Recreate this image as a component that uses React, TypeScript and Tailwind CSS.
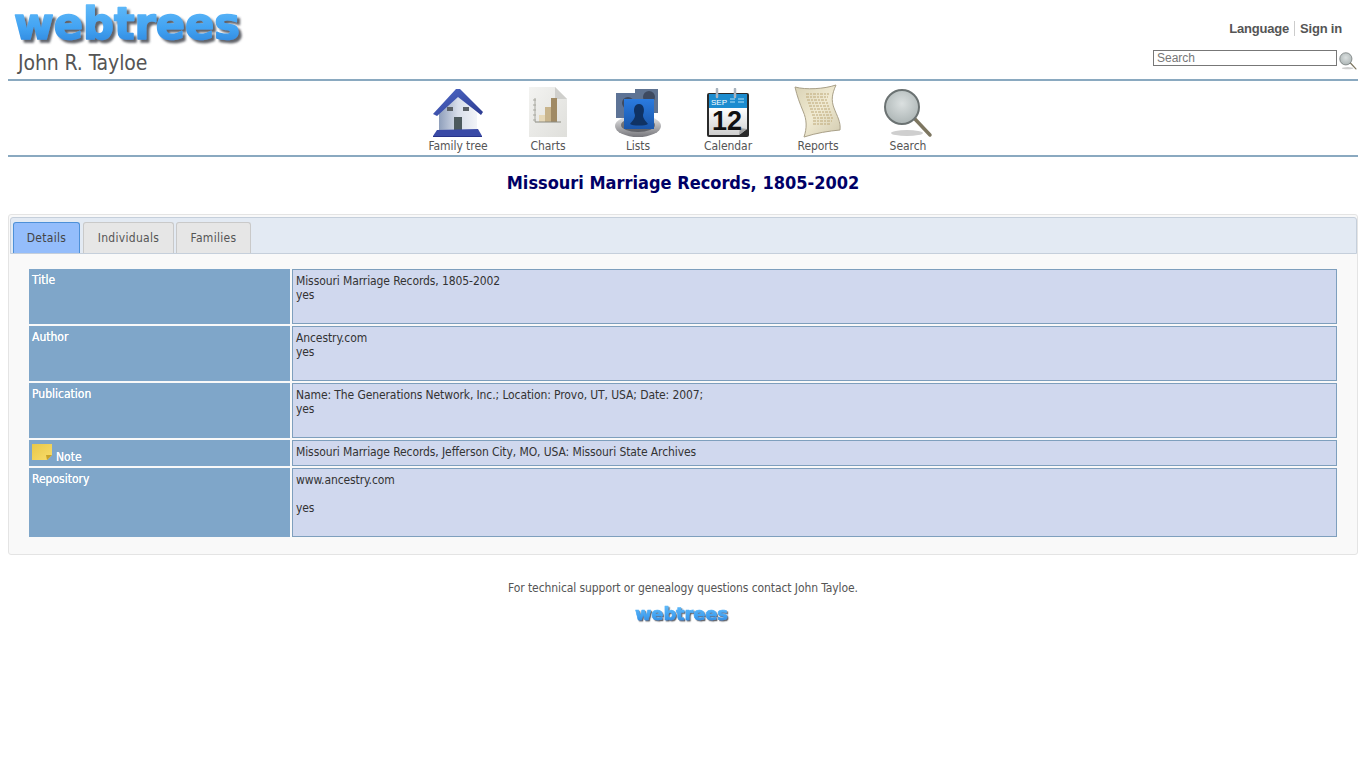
import type { ReactNode } from 'react';

const tahoma = "font-['DejaVu_Sans_Condensed','DejaVu_Sans',sans-serif] [font-stretch:condensed]";

function Logo({ width, height }: { width: number; height: number }) {
  const id = `wt${width}`;
  return (
    <svg width={width} height={height} viewBox="0 0 236 50" preserveAspectRatio="none" className="overflow-visible">
      <defs>
        <linearGradient id={id} x1="0" y1="0" x2="0" y2="1">
          <stop offset="0" stopColor="#68c0fb" />
          <stop offset="0.6" stopColor="#41a2f2" />
          <stop offset="1" stopColor="#2a7fd6" />
        </linearGradient>
        <filter id={`${id}s`} x="-5%" y="-10%" width="110%" height="125%">
          <feDropShadow dx="3" dy="3" stdDeviation="1.2" floodColor="#44494f" floodOpacity="0.85" />
        </filter>
      </defs>
      <text x="0" y="39" fontFamily="DejaVu Sans" fontWeight="700" fontSize="44" textLength="226" lengthAdjust="spacingAndGlyphs" fill={`url(#${id})`} stroke={`url(#${id})`} strokeWidth="1.5" strokeLinejoin="round" filter={`url(#${id}s)`}>webtrees</text>
    </svg>
  );
}

function HouseIcon() {
  return (
    <svg width="54" height="50" viewBox="0 0 54 50">
      <defs>
        <linearGradient id="wall" x1="0" y1="0" x2="1" y2="0">
          <stop offset="0" stopColor="#8f9fbb" />
          <stop offset="0.5" stopColor="#d8deea" />
          <stop offset="1" stopColor="#f2f4f8" />
        </linearGradient>
        <linearGradient id="roof" x1="0" y1="0" x2="1" y2="1">
          <stop offset="0" stopColor="#4f6ac8" />
          <stop offset="1" stopColor="#2c3a90" />
        </linearGradient>
      </defs>
      <path d="M8 25 L27 7 L46 25 L46 42 L8 42 Z" fill="url(#wall)" />
      <path d="M2 26 L25 1 L29 1 L52 24 L50 27 L27 9 L6 28 Z" fill="url(#roof)" />
      <rect x="16" y="19" width="6" height="4" fill="#5a6066" />
      <rect x="32" y="19" width="6" height="4" fill="#5a6066" />
      <rect x="23" y="29" width="8" height="13" fill="#4d5a5e" />
      <path d="M6 42 L47 41 L51 48 L2 48 Z" fill="#3a4aa6" />
      <path d="M2 48 H51 V49 H2 Z" fill="#27338a" />
    </svg>
  );
}

function ChartsIcon() {
  return (
    <svg width="40" height="52" viewBox="0 0 40 52">
      <defs>
        <linearGradient id="paper" x1="0" y1="0" x2="1" y2="1">
          <stop offset="0" stopColor="#f3f3f1" />
          <stop offset="1" stopColor="#dfdfdb" />
        </linearGradient>
      </defs>
      <path d="M1 1 L27 1 L39 13 L39 51 L1 51 Z" fill="url(#paper)" />
      <path d="M27 1 L27 13 L39 13 Z" fill="#cfcfcc" />
      <path d="M7 12 V36 M5 14 H8 M5 19 H8 M5 24 H8 M5 29 H8 M5 34 H8" stroke="#a8a8a0" />
      <rect x="11" y="29" width="6" height="7" fill="#e6d8b8" />
      <rect x="17" y="21" width="6" height="15" fill="#c8b48c" />
      <rect x="23" y="12" width="6" height="24" fill="#a08a64" />
      <path d="M7 36 H33" stroke="#8a8a80" />
    </svg>
  );
}

function ListsIcon() {
  return (
    <svg width="50" height="52" viewBox="0 0 50 52">
      <defs>
        <linearGradient id="base" x1="0" y1="0" x2="0" y2="1">
          <stop offset="0" stopColor="#eeeeee" />
          <stop offset="1" stopColor="#77777c" />
        </linearGradient>
        <linearGradient id="card" x1="0" y1="0" x2="0" y2="1">
          <stop offset="0" stopColor="#2a7be0" />
          <stop offset="1" stopColor="#1a56aa" />
        </linearGradient>
      </defs>
      <ellipse cx="25" cy="40" rx="23" ry="11" fill="url(#base)" />
      <ellipse cx="25" cy="39" rx="17" ry="7" fill="#33343c" opacity="0.55" />
      <rect x="3" y="7" width="24" height="25" fill="#5d7396" />
      <rect x="22" y="3" width="23" height="24" fill="#5f7391" />
      <circle cx="15" cy="17" r="6" fill="#3e4a60" />
      <circle cx="36" cy="11" r="6" fill="#3e4a60" />
      <rect x="11" y="13" width="30" height="30" fill="url(#card)" />
      <path d="M26 18 C31 18 32 24 30 29 C30 33 33 35 35 38 C32 40 20 40 17 38 C19 35 22 33 22 29 C20 24 21 18 26 18 Z" fill="#0f3263" />
    </svg>
  );
}

function CalendarIcon() {
  return (
    <svg width="44" height="50" viewBox="0 0 44 50">
      <defs>
        <linearGradient id="sheet" x1="0" y1="0" x2="0" y2="1">
          <stop offset="0" stopColor="#ffffff" />
          <stop offset="1" stopColor="#cfcfcf" />
        </linearGradient>
      </defs>
      <rect x="1" y="5" width="42" height="44" rx="2" fill="#2a2a2a" />
      <rect x="3" y="6" width="38" height="14" fill="#1c8ccf" />
      <text x="5" y="17" fontFamily="Liberation Sans" fontSize="8" fill="#fff">SEP</text>
      <path d="M24 11 H29 M24 14 H29 M32 11 H38 M32 14 H38" stroke="#7fc4ea" strokeWidth="1.5" />
      <path d="M3 20 H41 V41 L33 47 H3 Z" fill="url(#sheet)" />
      <path d="M33 47 L41 41 L34 40 Z" fill="#9f9f9f" />
      <text x="21" y="42" textAnchor="middle" fontFamily="Liberation Sans" fontWeight="700" fontSize="27" fill="#111">12</text>
      <path d="M11 1 V9 M29 1 V9" stroke="#aab4be" strokeWidth="2.5" strokeLinecap="round" />
    </svg>
  );
}

function ReportsIcon() {
  return (
    <svg width="48" height="54" viewBox="0 0 48 54">
      <defs>
        <linearGradient id="scroll" x1="0" y1="0" x2="1" y2="1">
          <stop offset="0" stopColor="#d9d2b4" />
          <stop offset="0.5" stopColor="#f0ead2" />
          <stop offset="1" stopColor="#d2cbb0" />
        </linearGradient>
      </defs>
      <path d="M1 3 C12 6 30 5 42 1 C38 10 37 16 40 24 C43 32 47 38 46 46 C35 47 22 49 10 53 C13 44 13 36 9 27 C6 20 3 12 1 3 Z" fill="url(#scroll)" stroke="#a9a088" />
      <path d="M12 10 H35 M12 13 H34 M13 16 H34 M14 19 H35 M15 22 H36 M16 25 H37 M17 28 H38 M18 31 H39 M19 34 H39 M19 37 H38 M19 40 H36" stroke="#bda878" strokeDasharray="3 1 2 1" />
    </svg>
  );
}

function LensIcon({ size = 50 }: { size?: number }) {
  return (
    <svg width={size} height={size} viewBox="0 0 50 50">
      <defs>
        <radialGradient id={`lens${size}`} cx="0.5" cy="0.4" r="0.65">
          <stop offset="0" stopColor="#dbe0e0" />
          <stop offset="1" stopColor="#a9b2b2" />
        </radialGradient>
      </defs>
      <ellipse cx="24" cy="45" rx="16" ry="3" fill="#cfcfcf" />
      <line x1="31" y1="30" x2="47" y2="47" stroke="#7d7660" strokeWidth="3.5" strokeLinecap="round" />
      <circle cx="19" cy="19" r="17" fill={`url(#lens${size})`} stroke="#6b7272" strokeWidth="2" />
    </svg>
  );
}

function NavItem({ icon, label }: { icon: ReactNode; label: string }) {
  return (
    <div className="flex h-[73px] w-[90px] flex-col items-center justify-end">
      <div className="flex h-[54px] items-end justify-center">{icon}</div>
      <div className="h-[16px] text-[12px] leading-[17px] tracking-[-0.05px] text-[#555]">{label}</div>
    </div>
  );
}

function Tab({ w, active, children }: { w: string; active?: boolean; children: ReactNode }) {
  return (
    <div
      className={`${w} flex h-[31px] items-center justify-center rounded-t-[3px] border border-b-0 text-[12px] tracking-[0.3px] ${
        active ? 'border-[#4d90d8] bg-[#94bdfb] text-[#444]' : 'border-[#c9c9c9] bg-[#e6e6e6] text-[#555]'
      }`}
    >
      {children}
    </div>
  );
}

function Row({ label, icon, h, children }: { label: string; icon?: boolean; h: string; children: ReactNode }) {
  return (
    <>
      <div className={`${h} bg-[#7fa6c9] pl-[3px] pt-[3px] text-[12px] leading-[16px] text-white [text-shadow:0_0_0.5px_#fff]`}>
        {icon ? (
          <div className="flex items-end">
            <svg width="21" height="18" viewBox="0 0 21 18">
              <defs>
                <linearGradient id="note" x1="0" y1="0" x2="1" y2="1">
                  <stop offset="0" stopColor="#e8c848" />
                  <stop offset="1" stopColor="#f8dc6c" />
                </linearGradient>
              </defs>
              <path d="M0 1 H20 V12 L15 17 H0 Z" fill="url(#note)" />
              <path d="M20 12 L15 17 L14 12 Z" fill="#c9a227" />
            </svg>
            <span className="ml-[3px] translate-y-[4px]">{label}</span>
          </div>
        ) : (
          label
        )}
      </div>
      <div className={`${h} border border-[#7e9fbd] bg-[#d0d8ee] pl-[3px] pt-[4px] text-[12px] leading-[14px] tracking-[-0.1px] text-[#333]`}>
        {children}
      </div>
    </>
  );
}

export default function App() {
  return (
    <div className={`${tahoma} min-h-[768px] bg-white px-[8px] text-[#555]`}>
      <header className="flex h-[81px] justify-between border-b-2 border-[#8aa9c0]">
        <div className="flex flex-col">
          <div className="ml-[6px] h-[50px]">
            <Logo width={236} height={50} />
          </div>
          <div className="ml-[10px] text-[21px] leading-[26px] tracking-[-0.1px] text-[#555]">John R. Tayloe</div>
        </div>
        <div className="flex flex-col items-end pt-[20px]">
          <div className="mr-[16px] flex h-[17px] items-center font-['Liberation_Sans',sans-serif] text-[13px] font-bold tracking-[-0.2px] text-[#555]">
            <span>Language</span>
            <span className="mx-[5px] h-[15px] border-l border-[#ccc]" />
            <span>Sign in</span>
          </div>
          <div className="mt-[13px] mr-[1px] flex items-start">
            <div className="h-[16px] w-[184px] border border-[#777] pl-[3px] font-['Liberation_Sans',sans-serif] text-[12px] leading-[14px] text-[#777]">
              Search
            </div>
            <div className="ml-[2px] mt-[2px]">
              <LensIcon size={18} />
            </div>
          </div>
        </div>
      </header>
      <nav className="flex h-[76px] justify-center border-b-2 border-[#8aa9c0]">
        <NavItem icon={<HouseIcon />} label="Family tree" />
        <NavItem icon={<ChartsIcon />} label="Charts" />
        <NavItem icon={<ListsIcon />} label="Lists" />
        <NavItem icon={<CalendarIcon />} label="Calendar" />
        <NavItem icon={<ReportsIcon />} label="Reports" />
        <NavItem icon={<LensIcon />} label="Search" />
      </nav>
      <h1 className="mt-[12px] h-[30px] text-center text-[18px] leading-[27px] font-bold text-[#000066]">
        Missouri Marriage Records, 1805-2002
      </h1>
      <div className="mt-[15px] h-[341px] rounded-[3px] border border-[#e4e4e4] bg-[#f9f9f9] pt-[2px] pl-[1px]">
        <div className="flex h-[37px] items-end gap-[3px] rounded-t-[3px] border border-[#c5cfdb] bg-[#e3eaf3] pl-[2px]">
          <Tab w="w-[67px]" active>Details</Tab>
          <Tab w="w-[91px]">Individuals</Tab>
          <Tab w="-ml-px w-[75px]">Families</Tab>
        </div>
        <div className="mt-[15px] ml-[19px] mr-[20px] grid grid-cols-[261px_1fr] gap-[2px]">
          <Row label="Title" h="h-[55px]">
            <div>Missouri Marriage Records, 1805-2002</div>
            <div>yes</div>
          </Row>
          <Row label="Author" h="h-[55px]">
            <div>Ancestry.com</div>
            <div>yes</div>
          </Row>
          <Row label="Publication" h="h-[55px]">
            <div>Name: The Generations Network, Inc.; Location: Provo, UT, USA; Date: 2007;</div>
            <div>yes</div>
          </Row>
          <Row label="Note" icon h="h-[26px]">
            <div>Missouri Marriage Records, Jefferson City, MO, USA: Missouri State Archives</div>
          </Row>
          <Row label="Repository" h="h-[69px]">
            <div>www.ancestry.com</div>
            <div className="mt-[14px]">yes</div>
          </Row>
        </div>
      </div>
      <footer className="mt-[25px] flex flex-col items-center">
        <div className="text-[12px] leading-[16px] tracking-[-0.09px] text-[#555]">For technical support or genealogy questions contact John Tayloe.</div>
        <div className="mt-[8px]">
          <Logo width={97} height={21} />
        </div>
      </footer>
    </div>
  );
}
